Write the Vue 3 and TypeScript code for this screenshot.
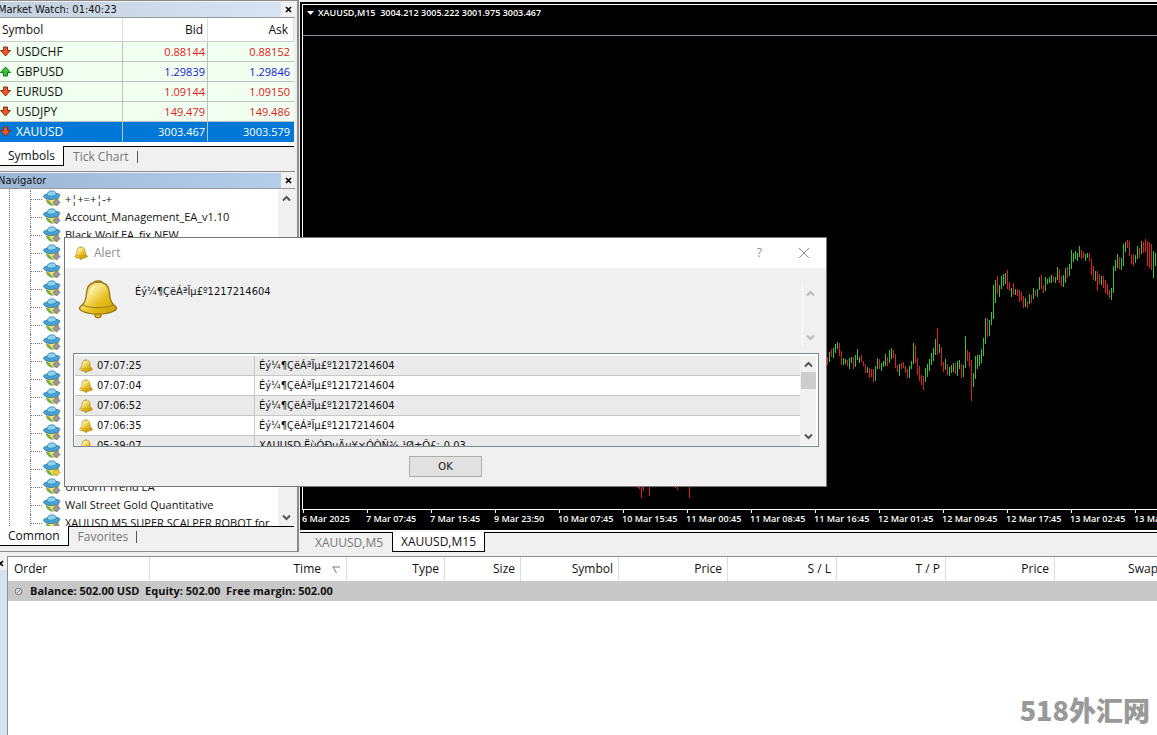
<script setup lang="ts">
import { ref } from 'vue'

interface Quote { symbol: string; up: boolean; bid: string; ask: string }

const quotes: Quote[] = [
  { symbol: 'USDCHF', up: false, bid: '0.88144', ask: '0.88152' },
  { symbol: 'GBPUSD', up: true, bid: '1.29839', ask: '1.29846' },
  { symbol: 'EURUSD', up: false, bid: '1.09144', ask: '1.09150' },
  { symbol: 'USDJPY', up: false, bid: '149.479', ask: '149.486' },
  { symbol: 'XAUUSD', up: false, bid: '3003.467', ask: '3003.579' },
]
const selected = ref('XAUUSD')

const experts: string[] = [
  '+¦+=+¦-+', 'Account_Management_EA_v1.10', 'Black Wolf EA_fix NEW',
  ...Array<string>(13).fill(''),
  'Unicorn Trend EA', 'Wall Street Gold Quantitative', 'XAUUSD M5 SUPER SCALPER ROBOT for',
]
const activeExpert = 15

const times = ['6 Mar 2025', '7 Mar 07:45', '7 Mar 15:45', '9 Mar 23:50', '10 Mar 07:45', '10 Mar 15:45', '11 Mar 00:45',
  '11 Mar 08:45', '11 Mar 16:45', '12 Mar 01:45', '12 Mar 09:45', '12 Mar 17:45', '13 Mar 02:45', '13 Mar 10:45']

// High and low of each bar in thirds of a pixel below the chart's price top; g = rising, r = falling.
const bars = `r380-405 g367-398 r358-383 g354-383 g342-368 g336-356 r339-377 r363-404 g384-404 g387-402 r391-410
g384-416 g381-398 r381-416 g375-410 g357-390 g381-399 r375-397 r393-407 r402-430 g411-428 r414-444 r417-440 r418-458
g408-452 g384-417 r387-418 g399-423 g393-412 g372-407 r381-407 g360-398 g354-386 r360-383 r372-414 r404-425 g402-437
r399-418 r397-414 r408-430 r416-442 g408-443 g393-416 g339-402 r345-398 r384-436 r408-452 r435-464 r438-480 g414-455
g402-440 g387-423 g369-406 g354-392 g327-376 r294-374 g342-370 r351-408 r396-425 g387-421 r402-435 g411-437 g405-428
g399-425 r399-432 g393-437 g390-416 r402-443 g405-440 g318-413 r360-392 r366-410 r390-513 g429-470 g378-446 g375-418
g375-407 g357-398 g324-377 g264-342 r264-320 g270-318 g246-285 g165-266 g150-218 r138-191 g165-200 g138-176 g132-167
g129-161 r120-177 r156-184 g174-200 r159-194 g177-194 r177-197 r180-215 r186-213 r198-234 g204-231 r213-233 g192-221
r195-218 g174-206 r180-197 g177-200 g141-179 r135-176 r165-190 g141-182 g147-161 g141-158 g135-158 r138-155 g141-158
g111-149 r117-158 r138-167 g135-170 g114-158 r111-143 g102-137 g60-116 g69-95 g63-87 g69-92 g48-80 r60-87 r66-83
g72-93 g69-83 r69-92 r87-134 r108-149 g123-152 r123-182 r132-161 g138-164 r138-173 r150-188 r162-194 r180-203 g174-209
g108-188 g90-122 g72-113 r81-116 g84-119 g42-107 g36-66 r30-54 r33-77 r75-101 r72-107 g75-98 g48-87 r54-83 g33-71
r36-68 r27-66 r33-107 r36-113 r42-119 g63-143 g69-107`.split(/\s+/)

// Lows of the bars under the first rally: x, length.
const lows = [[334, 2], [336, 3], [338, 12], [340, 5], [346, 10], [372, 2], [374, 4], [386, 12]]

function barPath(kind: string): string {
  return bars.map((bar, i) => {
    if (bar[0] !== kind) return ''
    const [high, low] = bar.slice(1).split('-').map(Number)
    return `M${524 + i * 2} ${194 + Math.round(high / 3)}h1v${Math.round((low - high) / 3)}h-1z`
  }).join('')
}
const rising = barPath('g')
const falling = barPath('r') + lows.map(([x, h]) => `M${x} 450h1v${h}h-1z`).join('')

const message = 'Éý¼¶ÇëÁªÏµ£º1217214604'
const alerts = [
  { time: '07:07:25', text: message },
  { time: '07:07:04', text: message },
  { time: '07:06:52', text: message },
  { time: '07:06:35', text: message },
  { time: '05:39:07', text: 'XAUUSD ËùÓÐµÄµ¥×ÓÒÑ¾-¹Ø±Õ£¡-0.03' },
]
const columns = ['Order', 'Time', 'Type', 'Size', 'Symbol', 'Price', 'S / L', 'T / P', 'Price', 'Swap']
</script>

<template>
  <div class="app">
    <svg class="defs" aria-hidden="true">
      <defs>
        <linearGradient id="gold" x1="0" y1="0" x2="1" y2="1">
          <stop offset="0" stop-color="#e9c233" /><stop offset=".35" stop-color="#f8e68a" />
          <stop offset=".6" stop-color="#e6be1c" /><stop offset="1" stop-color="#c99a08" />
        </linearGradient>
        <symbol id="bell" viewBox="0 0 40 40">
          <ellipse cx="20" cy="35.500" rx="3.500" ry="3.500" fill="#e3b820" stroke="#8f6a10" />
          <path d="M16 3.500c0-2 8-2 8 0 6 1.500 7 6 7.500 11 .5 7 2 10 6.500 13.500 1.500 2-.5 3.500-3 4.500-8 3.500-22 3.500-30 0-2.500-1-4.500-2.500-3-4.500C6.500 24.500 8 21.500 8.500 14.500c.5-5 1.500-9.500 7.500-11z" fill="url(#gold)" stroke="#94700f" stroke-width="1.300" />
          <path d="M16 3.800c1-1.500 7-1.500 8 0z" fill="#8c6a12" />
          <path d="M5 26c8 3.500 22 3.500 30 0" fill="none" stroke="#a57d10" stroke-width="1.200" />
          <path d="M12 15c.5-5 2-8 6-8.500-2 3-4 5-5.500 9.500z" fill="#fffbdc" opacity=".8" />
        </symbol>
        <symbol id="expert" viewBox="0 0 18 17">
          <path d="M3.500 8c0 4.500 3 7 6.500 7s5.500-3 5.500-7z" fill="#f3e06a" stroke="#8f8a3a" stroke-width=".7" />
          <path d="M3 10c1 3.500 3 5.500 7 5.500L6 10.500z" fill="#68b34a" />
          <path d="M.8 5.500C3 3.500 14 2.200 16.500 4.500c1.500 2-3 5-8 5C4 9.500-.5 7.500.8 5.500z" fill="#47a5d8" stroke="#256f9e" stroke-width=".8" />
          <path d="M4 5.500C4.500 2 6 .8 9 .8s4 1.200 4.300 3.700C11 6.300 7 6.700 4 5.500z" fill="#8bd2f0" stroke="#2a7dad" stroke-width=".7" />
        </symbol>
        <symbol id="arrow" viewBox="0 0 11 11">
          <path d="M3.500 1h4v3.500h3L5.500 10 .5 4.500h3z" />
        </symbol>
      </defs>
    </svg>

    <main class="workspace">
      <aside class="side">
        <section class="panel">
          <header class="title"><h2>Market Watch: 01:40:23</h2><button class="close" aria-label="Close Market Watch">
            <svg width="7" height="7"><path d="M1 1l5 5M6 1L1 6" stroke="#000" stroke-width="1.600" /></svg></button></header>
          <table class="quotes">
            <colgroup><col><col class="c-bid"><col class="c-ask"></colgroup>
            <thead><tr><th>Symbol</th><th>Bid</th><th>Ask</th></tr></thead>
            <tbody>
              <tr v-for="q in quotes" :key="q.symbol" :class="{ up: q.up, selected: q.symbol === selected }" @click="selected = q.symbol">
                <td><div class="symbol"><svg class="dir" width="11" height="11"><use href="#arrow" /></svg>{{ q.symbol }}</div></td>
                <td>{{ q.bid }}</td><td>{{ q.ask }}</td>
              </tr>
            </tbody>
          </table>
          <nav class="tabs"><button class="on">Symbols</button><button>Tick Chart</button><i></i></nav>
        </section>
        <section class="panel navigator">
          <header class="title active"><h2>Navigator</h2><button class="close" aria-label="Close Navigator">
            <svg width="7" height="7"><path d="M1 1l5 5M6 1L1 6" stroke="#000" stroke-width="1.600" /></svg></button></header>
          <div class="tree">
            <ul>
              <li v-for="(name, i) in experts" :key="i">
                <svg width="18" height="17">
                  <use href="#expert" />
                  <path d="M13.500 9l3.500 3.500-3.500 3.500-3.500-3.500z" :fill="i === activeExpert ? '#f0cf3a' : '#9a9a9a'" :stroke="i === activeExpert ? '#a07c10' : '#666'" stroke-width=".8" />
                </svg><span>{{ name }}</span>
              </li>
            </ul>
            <div class="scroll">
              <svg width="9" height="7"><path d="M1 5.500l3.500-3.500L8 5.500" /></svg>
              <svg width="9" height="7"><path d="M1 1.500L4.500 5 8 1.500" /></svg>
            </div>
          </div>
          <nav class="tabs"><button class="on">Common</button><button>Favorites</button><i></i></nav>
        </section>
      </aside>

      <section class="charts">
        <div class="chart">
          <h1><svg width="7" height="4"><path d="M0 0h7L3.500 4z" fill="#fff" /></svg>XAUUSD,M15&nbsp; 3004.212 3005.222 3001.975 3003.467</h1>
          <svg class="plot" role="img" aria-label="XAUUSD 15 minute bars">
            <path class="rising" :d="rising" />
            <path class="falling" :d="falling" />
          </svg>
          <div class="axis"><span v-for="t in times" :key="t">{{ t }}</span></div>
        </div>
        <nav class="tabs chart-tabs"><button>XAUUSD,M5</button><button class="on">XAUUSD,M15</button></nav>
      </section>
    </main>

    <section class="terminal">
      <div class="grip"><button class="close" aria-label="Close terminal"><svg width="7" height="7"><path d="M-2 1l5 5M3 1L-2 6" stroke="#000" stroke-width="1.600" /></svg></button></div>
      <div class="orders">
        <table>
          <colgroup><col v-for="(c, i) in columns" :key="i" :class="'o' + i"></colgroup>
          <thead><tr><th v-for="(c, i) in columns" :key="i">{{ c }}<svg v-if="c === 'Time'" width="9" height="8"><path d="M.5 1h7.500M1 1l3.500 6" fill="none" stroke="#777" /></svg></th></tr></thead>
          <tbody><tr><td colspan="10"><div class="balance"><svg width="9" height="9"><circle cx="4.500" cy="4.500" r="3.300" fill="#ddd" stroke="#777" /><path d="M2.500 6.500l4-4" stroke="#777" /></svg><span>Balance: 502.00 USD&nbsp; Equity: 502.00&nbsp; Free margin: 502.00</span></div></td></tr></tbody>
        </table>
      </div>
    </section>

    <div class="watermark">518外汇网</div>

    <div class="dialog" role="dialog" aria-labelledby="alert-title">
      <header class="caption">
        <svg width="14" height="14"><use href="#bell" /></svg><h2 id="alert-title">Alert</h2>
        <button aria-label="Help">?</button>
        <button aria-label="Close"><svg width="12" height="12"><path d="M1 1l10 10M11 1L1 11" stroke="#8a8a8a" /></svg></button>
      </header>
      <div class="message">
        <svg width="40" height="40"><use href="#bell" /></svg>
        <p>{{ message }}</p>
        <div class="scroll pale">
          <svg width="9" height="7"><path d="M1 5.500l3.500-3.500L8 5.500" /></svg>
          <svg width="9" height="7"><path d="M1 1.500L4.500 5 8 1.500" /></svg>
        </div>
      </div>
      <div class="log">
        <table>
          <colgroup><col class="c-time"><col></colgroup>
          <tbody><tr v-for="a in alerts" :key="a.time">
            <td><div class="symbol"><svg width="14" height="14"><use href="#bell" /></svg>{{ a.time }}</div></td><td>{{ a.text }}</td>
          </tr></tbody>
        </table>
        <div class="scroll">
          <svg width="9" height="7"><path d="M1 5.500l3.500-3.500L8 5.500" /></svg>
          <b></b>
          <svg width="9" height="7"><path d="M1 1.500L4.500 5 8 1.500" /></svg>
        </div>
      </div>
      <button class="ok">OK</button>
    </div>
  </div>
</template>

<style>
body { margin: 0; overflow: hidden; }
</style>

<style scoped>
.app { position: relative; display: flex; flex-direction: column; height: 100vh; overflow: hidden; background: #f0f0f0; color: #111; font: 12px/16px "Open Sans", "Noto Sans", sans-serif; }
.app *, .app { box-sizing: border-box; }
.defs { position: absolute; width: 0; height: 0; }
h1, h2, p, ul { margin: 0; padding: 0; font: inherit; list-style: none; }
button { margin: 0; padding: 0; border: 0; background: none; font: inherit; color: inherit; }
table { border-collapse: separate; border-spacing: 0; table-layout: fixed; width: 100%; }
th, td { padding: 0; font-weight: 400; white-space: nowrap; overflow: hidden; }
svg { flex: none; }

.workspace { display: flex; flex: none; height: 552px; }
.side { display: flex; flex-direction: column; width: 299px; padding-right: 2px; border-top: 1px solid #8c8c8c; border-bottom: 1px solid #8c8c8c; border-right: 2px solid #8c8c8c; background: #f0f0f0; }
.panel { display: flex; flex-direction: column; padding-top: 1px; }
.navigator { flex: 1; min-height: 0; border-top: 1px solid #8c8c8c; }
.title { display: flex; align-items: center; justify-content: space-between; height: 16px; flex: none; border-bottom: 1px solid #999; background: linear-gradient(90deg, #c3d0de, #d9e5f3); font: 11px/14px "DejaVu Sans Condensed", "DejaVu Sans", sans-serif; }
.title.active { background: linear-gradient(90deg, #9cb7d5, #b6cfeb); }
.title h2 { margin-left: -2px; }
.close { display: flex; align-items: center; justify-content: center; width: 14px; height: 15px; background: #f0f0f0; }
.quotes { width: 294px; background: #fff; }
.c-bid { width: 85px; }
.c-ask { width: 86px; }
.quotes th { height: 24px; text-align: right; padding-right: 4px; border-bottom: 1px solid #ccc; border-right: 1px solid #ddd; }
.quotes th:first-child { text-align: left; padding-left: 2px; }
.quotes th:last-child { padding-right: 5px; }
.quotes td { height: 20px; text-align: right; padding-right: 2px; background: #f0fff0; border-bottom: 1px solid #c0c0c0; border-right: 1px solid #c0c0c0; color: #e02020; font-size: 11px; }
.quotes td:last-child { border-right: 0; padding-right: 4px; }
.quotes td:first-child { color: #111; font-size: 12px; }
.quotes .up td { color: #1515d8; }
.quotes .up td:first-child { color: #111; }
.quotes .selected td, .quotes .selected td:first-child { background: #0078d7; color: #fff; border-bottom-color: #0078d7; }
.symbol { display: flex; align-items: center; gap: 5px; }
.dir { fill: #e8562a; stroke: #8d2c0c; }
.up .dir { fill: #35c435; stroke: #147514; transform: rotate(180deg); }
.tabs { display: flex; flex: none; height: 20px; border-top: 1px solid #000; color: #777; }
.panel .tabs { margin: 4px 1px 5px 0; box-shadow: 0 -4px #fff; }
.navigator .tabs { margin: 0 1px 5px 0; box-shadow: none; }
.tabs button { padding: 0 8px 0 9px; }
.tabs .on { margin-top: -1px; padding: 0 8px; border: solid #000; border-width: 0 1px 1px 0; background: #fff; color: #111; }
.tabs i { width: 1px; height: 12px; margin-top: 4px; background: #555; }
.tree { display: flex; flex: 1; min-height: 0; margin-right: 1px; background: #fff; overflow: hidden; }
.tree ul { flex: 1; min-width: 0; padding-top: 1px; margin-left: 9px; border-left: 1px dotted #777; overflow: hidden; }
.tree li { display: flex; align-items: center; height: 18px; margin-left: 20px; border-left: 1px dotted #777; white-space: nowrap; font-size: 11px; }
.tree li::before { content: ""; flex: none; width: 11px; margin-right: 1px; border-top: 1px dotted #777; }
.tree li svg { margin-bottom: 2px; }
.tree li span { margin-left: 4px; }
.scroll { display: flex; flex: none; flex-direction: column; align-items: center; justify-content: space-between; width: 16px; padding: 6px 0 5px; background: #f0f0f0; }
.scroll path { fill: none; stroke: #555; stroke-width: 2; }

.charts { display: flex; flex: 1; flex-direction: column; min-width: 0; padding: 2px 0 0 1px; background: #f0f0f0; }
.chart { display: flex; flex: 1; flex-direction: column; min-height: 0; padding-left: 2px; background: #000; color: #fff; border-top: 2px solid #000; border-bottom: 1px solid #fff; font: 600 9px/14px "Open Sans", sans-serif; }
h1 { display: flex; align-items: center; gap: 4px; height: 32px; padding: 0 0 14px 4px; flex: none; border: solid #fff; border-width: 1px 0 1px 1px; border-bottom-color: #8f8f9c; white-space: nowrap; font-weight: 600; }
.plot { flex: 1; width: 100%; min-height: 0; border-left: 1px solid #fff; }
.rising { fill: #35c435; }
.falling { fill: #e02020; }
.axis { display: flex; flex: none; height: 21px; border-top: 1px solid #fff; overflow: hidden; }
.axis span { flex: none; width: 64px; padding-top: 2px; white-space: nowrap; background: linear-gradient(#fff, #fff) 1px 0 / 1px 3px no-repeat; }
.chart-tabs { margin-top: 1px; }
.chart-tabs button { padding: 0 9px 0 15px; }
.chart-tabs .on { border-left-width: 1px; padding: 0 8px; }

.terminal { display: flex; flex: 1; min-height: 0; padding-top: 4px; }
.grip { flex: none; width: 7px; background: #d5e2f0; }
.grip .close { justify-content: flex-start; width: 7px; height: 14px; }
.orders { flex: 1; min-width: 0; border: solid #8c8c8c; border-width: 1px 0 0 1px; background: #fff; overflow: hidden; }
.orders table { width: 1156px; }
.o0 { width: 142px; } .o1 { width: 197px; } .o2, .o4 { width: 98px; } .o3 { width: 76px; }
.orders th { height: 24px; padding-right: 5px; text-align: right; border-right: 1px solid #ddd; }
.orders th:first-child { padding-left: 6px; text-align: left; }
.orders th svg { margin: 0 0 -1px 11px; }
.balance { display: flex; align-items: center; gap: 7px; height: 20px; padding-left: 6px; background: #c8c8c8; font-size: 11px; font-weight: 700; }
.watermark { position: absolute; right: 7px; bottom: 5px; color: #999; font: 900 27px/40px "Noto Sans CJK SC", sans-serif; }

.dialog { position: absolute; left: 64px; top: 237px; display: flex; flex-direction: column; width: 763px; height: 250px; border: 1px solid #777; background: #f0f0f0; font: 11px/14px "DejaVu Sans Condensed", "DejaVu Sans", sans-serif; }
.caption { display: flex; align-items: center; flex: none; height: 30px; padding: 0 16px 0 9px; background: #fff; color: #8e8e8e; font: 12px/16px "Open Sans", sans-serif; }
.caption h2 { flex: 1; margin-left: 6px; }
.caption button { display: flex; margin-left: 36px; }
.message { display: flex; flex: none; height: 62px; margin: 16px 8px 7px 13px; }
.message svg { margin-top: -5px; }
.message p { flex: 1; padding-top: 1px; margin-left: 17px; }
.scroll.pale { border-left: 1px solid #fff; }
.message .scroll svg { margin: 0; }
.pale path { stroke: #bbb; }
.log { display: flex; height: 94px; margin: 0 7px 1px 8px; padding: 2px 2px 1px 1px; border: 1px solid #7d8792; background: #fff; overflow: hidden; }
.log table { flex: 1; height: 100px; }
.log .scroll { height: 89px; padding: 5px 0; justify-content: flex-start; }
.log .scroll b { width: 15px; height: 17px; margin: 4px 0 auto; background: #cdcdcd; }
.c-time { width: 180px; }
.log td { height: 20px; padding-left: 4px; border: solid #c6c6c6; border-width: 0 1px 1px 0; }
.log td:last-child { border-right: 0; }
.log tr:nth-child(odd) td { background: #eaeaea; }
.log .symbol { gap: 4px; }
.ok { width: 73px; height: 21px; margin: 8px auto 0 344px; border: 1px solid #adadad; background: #e1e1e1; }
</style>
